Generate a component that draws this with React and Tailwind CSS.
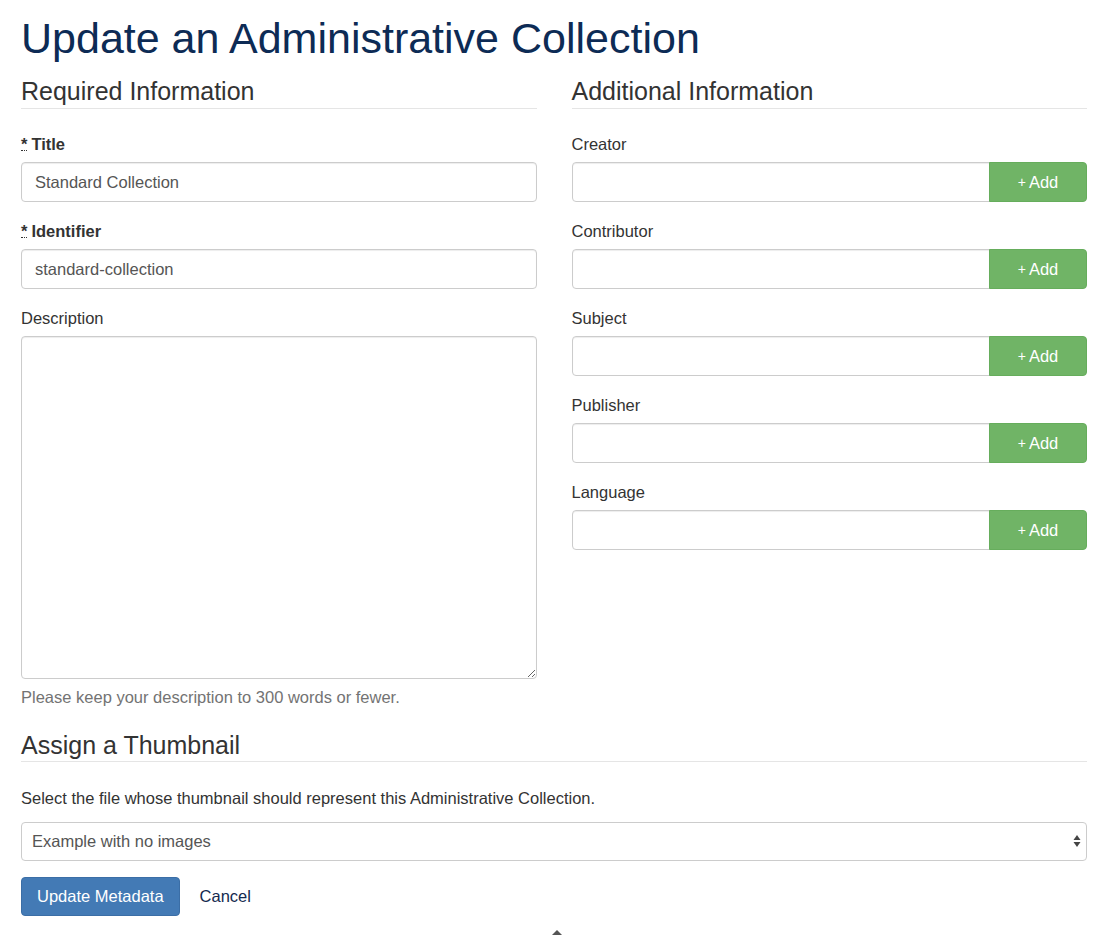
import React, { useState } from "react";

const font = { fontFamily: '"Liberation Sans", Arial, sans-serif' };

const inputCls =
  "w-full h-[40px] px-[13px] text-[16.5px] text-[#555] bg-white border border-[#ccc] rounded-[4px] shadow-[inset_0_1px_1px_rgba(0,0,0,0.075)] focus:outline-none";

const h2Cls = "text-[25px] leading-[28px] text-[#333] pb-[3px] border-b border-[#e5e5e5]";

const Req = () => (
  <abbr
    title="required"
    className="no-underline border-b border-dotted border-[#333] mr-[4px] leading-[12px] inline-block"
  >
    *
  </abbr>
);

const MultiField = ({ label }) => (
  <div className="mb-[19px]">
    <label className="block text-[16.5px] leading-[20px] text-[#333] mb-[8px]">{label}</label>
    <div className="flex">
      <input type="text" className={inputCls + " rounded-r-none"} />
      <button
        type="button"
        className="shrink-0 w-[98px] h-[40px] bg-[#70b466] border border-[#66ad5c] text-white text-[16.5px] rounded-r-[4px] -ml-px flex items-center justify-center"
      >
        <span className="text-[14px] mr-[3px]">+</span>Add
      </button>
    </div>
  </div>
);

const App = () => {
  const [form, setForm] = useState({
    title: "Standard Collection",
    identifier: "standard-collection",
    description: "",
  });

  // keep the controlled inputs editable
  const handleChange = (e) => {
    const { name, value } = e.target;
    setForm((prev) => ({ ...prev, [name]: value }));
  };

  return (
    <div className="min-h-[938px] bg-white pl-[21px] pr-[13px] pt-[14px] text-[#333]" style={font}>
      <h1 className="text-[43px] leading-[48px] text-[#0d2b55] mb-[15px]">
        Update an Administrative Collection
      </h1>

      <form onSubmit={(e) => e.preventDefault()}>
        <div className="grid grid-cols-2 gap-x-[35px]">
          {/* Required */}
          <div>
            <h2 className={h2Cls + " mb-[25px]"}>Required Information</h2>

            <div className="mb-[19px]">
              <label className="block text-[16.5px] leading-[20px] font-bold mb-[8px]">
                <Req />
                Title
              </label>
              <input name="title" value={form.title} onChange={handleChange} className={inputCls} />
            </div>

            <div className="mb-[19px]">
              <label className="block text-[16.5px] leading-[20px] font-bold mb-[8px]">
                <Req />
                Identifier
              </label>
              <input
                name="identifier"
                value={form.identifier}
                onChange={handleChange}
                className={inputCls}
              />
            </div>

            <div>
              <label className="block text-[16.5px] leading-[20px] mb-[8px]">Description</label>
              <textarea
                name="description"
                value={form.description}
                onChange={handleChange}
                className="block w-full h-[343px] px-[13px] py-[8px] text-[16.5px] border border-[#ccc] rounded-[4px] shadow-[inset_0_1px_1px_rgba(0,0,0,0.075)] focus:outline-none"
              ></textarea>
              <p className="text-[16.5px] leading-[22px] text-[#737373] mt-[7px]">
                Please keep your description to 300 words or fewer.
              </p>
            </div>
          </div>

          {/* Additional */}
          <div>
            <h2 className={h2Cls + " mb-[25px]"}>Additional Information</h2>
            {["Creator", "Contributor", "Subject", "Publisher", "Language"].map((l) => (
              <MultiField key={l} label={l} />
            ))}
          </div>
        </div>

        {/* Thumbnail */}
        <h2 className="text-[25px] leading-[28px] text-[#333] pb-[2px] border-b border-[#e5e5e5] mt-[23px] mb-[25px]">
          Assign a Thumbnail
        </h2>
        <p className="text-[16.5px] leading-[22px] mb-[13px]">
          Select the file whose thumbnail should represent this Administrative Collection.
        </p>
        <div className="relative mb-[16px]">
          <select className="appearance-none w-full h-[39px] pl-[10px] pr-[30px] text-[16.5px] text-[#555] bg-white border border-[#ccc] rounded-[4px] focus:outline-none">
            <option>Example with no images</option>
          </select>
          <svg
            className="absolute right-[6px] top-[12px] pointer-events-none"
            width="8"
            height="14"
            viewBox="0 0 8 14"
          >
            <path d="M4 1 L7.5 6 L0.5 6 Z" fill="#444" />
            <path d="M4 13 L7.5 8 L0.5 8 Z" fill="#444" />
          </svg>
        </div>

        <div className="flex items-center gap-[20px]">
          <button
            type="submit"
            className="h-[39px] px-[15px] bg-[#437ab5] border border-[#3b6ea6] text-white text-[16.5px] rounded-[4px]"
          >
            Update Metadata
          </button>
          <a href="#" className="text-[16.5px] text-[#142a4f]">
            Cancel
          </a>
        </div>
      </form>

      <div className="flex justify-center mt-[14px]">
        <div className="w-0 h-0 border-l-[5px] border-r-[5px] border-b-[5px] border-l-transparent border-r-transparent border-b-[#555] ml-[6px]"></div>
      </div>
    </div>
  );
};

export default App;
